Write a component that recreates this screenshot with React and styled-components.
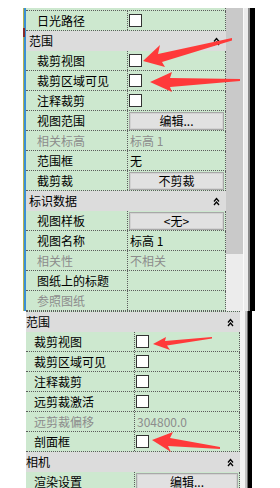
import React from "react";
import styled, { createGlobalStyle } from "styled-components";

const Global = createGlobalStyle`
  html, body { margin: 0; padding: 0; background: #fff; }
  body { font-family: "Noto Sans CJK SC", "Noto Sans", sans-serif; font-size: 12px; }
`;

const Page = styled.div`
  position: relative;
  width: 280px;
  height: 488px;
  overflow: hidden;
  background: #fff;
  padding-top: 8px;
  box-sizing: border-box;
  display: flex;
  flex-direction: column;
`;

const Shot = styled.div`
  display: flex;
  margin-left: ${(p) => p.$left}px;
  height: ${(p) => p.$h}px;
  overflow: hidden;
  flex-shrink: 0;
`;

const LeftEdge = styled.div`
  position: relative;
  width: 3px;
  background: linear-gradient(to right, #b7b24e 0 1px, #3a8fd3 1px 3px);
`;

const EdgeMark = styled.span`
  position: absolute;
  left: 0;
  top: 20px;
  width: 2px;
  height: 9px;
  background: #8a2a2a;
`;

const Panel = styled.div`
  width: ${(p) => p.$w}px;
  display: flex;
  flex-direction: column;
  background: #cde8cf;
  ${(p) => (p.$topLine ? "border-top: 1px dotted #5c5c5c;" : "")}
`;

const Spacer = styled.div`
  height: 5px;
  box-sizing: border-box;
  border-bottom: 1px dotted #5c5c5c;
  border-right: 1px dotted #5c5c5c;
`;

const Row = styled.div`
  display: flex;
  height: 20px;
  flex-shrink: 0;
  box-sizing: border-box;
  border-bottom: 1px dotted #5c5c5c;
  border-right: 1px dotted #5c5c5c;
`;

const Label = styled.div`
  width: ${(p) => p.$w}px;
  flex-shrink: 0;
  box-sizing: border-box;
  padding-left: ${(p) => p.$pad}px;
  border-right: 1px dotted #5c5c5c;
  display: flex;
  align-items: center;
  white-space: nowrap;
  overflow: hidden;
  color: ${(p) => (p.$muted ? "#8c8c8c" : "#000")};
  line-height: 1;
`;

const Value = styled.div`
  flex: 1;
  min-width: 0;
  display: flex;
  align-items: center;
  padding-left: ${(p) => p.$pad ?? 1}px;
  white-space: nowrap;
  color: ${(p) => (p.$muted ? "#8c8c8c" : "#000")};
  line-height: 1;
`;

const Check = styled.span`
  width: 13px;
  height: 13px;
  box-sizing: border-box;
  border: 1px solid #333;
  background: #fff;
`;

const Button = styled.div`
  flex: 1;
  height: 18px;
  margin-right: 1px;
  box-sizing: border-box;
  background: #e1e1e1;
  border: 1px solid #a8a8a8;
  box-shadow: inset 0 0 0 1px #d2d2d2;
  display: flex;
  align-items: center;
  justify-content: center;
  color: #000;
`;

const Header = styled.div`
  height: 20px;
  flex-shrink: 0;
  background: #dcdcdc;
  display: flex;
  align-items: center;
  justify-content: space-between;
  padding-left: ${(p) => p.$pad}px;
  padding-right: 6px;
  color: #000;
  line-height: 1;
`;

const Scrollbar = styled.div`
  width: 17px;
  display: flex;
  flex-direction: column;
  background: #ececec;
`;

const Thumb = styled.div`
  height: ${(p) => p.$h}px;
  background: #c9c9c9;
`;

const Frame = styled.div`
  width: ${(p) => p.$w}px;
  background: ${(p) => p.$bg};
`;

const Overlay = styled.svg`
  position: absolute;
  left: 0;
  top: 0;
  pointer-events: none;
`;

const Chevrons = () => (
  <svg width="7" height="9" viewBox="0 0 7 9" fill="none" stroke="#000" strokeWidth="1.3">
    <polyline points="1,4.5 3.5,1.5 6,4.5" />
    <polyline points="1,8 3.5,5 6,8" />
  </svg>
);

const topItems = [
  { t: "row", label: "日光路径", check: true },
  { t: "head", label: "范围" },
  { t: "row", label: "裁剪视图", check: true },
  { t: "row", label: "裁剪区域可见", check: true },
  { t: "row", label: "注释裁剪", check: true },
  { t: "row", label: "视图范围", button: "编辑..." },
  { t: "row", label: "相关标高", value: "标高 1", muted: true },
  { t: "row", label: "范围框", value: "无" },
  { t: "row", label: "截剪裁", button: "不剪裁" },
  { t: "head", label: "标识数据" },
  { t: "row", label: "视图样板", button: "<无>" },
  { t: "row", label: "视图名称", value: "标高 1" },
  { t: "row", label: "相关性", value: "不相关", muted: true },
  { t: "row", label: "图纸上的标题", value: "" },
  { t: "row", label: "参照图纸", value: "", muted: true },
];

const bottomItems = [
  { t: "head", label: "范围" },
  { t: "row", label: "裁剪视图", check: true },
  { t: "row", label: "裁剪区域可见", check: true },
  { t: "row", label: "注释裁剪", check: true },
  { t: "row", label: "远剪裁激活", check: true },
  { t: "row", label: "远剪裁偏移", value: "304800.0", muted: true },
  { t: "row", label: "剖面框", check: true },
  { t: "head", label: "相机" },
  { t: "row", label: "渲染设置", button: "编辑..." },
];

function Items({ items, labelW, labelPad, headPad }) {
  return items.map((it, i) =>
    it.t === "head" ? (
      <Header key={i} $pad={headPad}>
        <span>{it.label}</span>
        <Chevrons />
      </Header>
    ) : (
      <Row key={i}>
        <Label $w={labelW} $pad={labelPad} $muted={it.muted}>
          {it.label}
        </Label>
        <Value $muted={it.muted} $pad={it.value ? 2 : 1}>
          {it.check && <Check />}
          {it.button && <Button>{it.button}</Button>}
          {it.value}
        </Value>
      </Row>
    )
  );
}

export default function App() {
  return (
    <>
      <Global />
      <Page>
        <Shot $left={23} $h={303}>
          <LeftEdge>
            <EdgeMark />
          </LeftEdge>
          <Panel $w={200}>
            <Spacer />
            <Items items={topItems} labelW={102} labelPad={11} headPad={3} />
          </Panel>
          <Scrollbar>
            <Thumb $h={246} />
          </Scrollbar>
          <Frame
            $w={12}
            $bg="linear-gradient(to right, #fafafa 0 1px, #ececec 1px 5px, #8a8a8a 5px 7px, #000 7px 12px)"
          />
        </Shot>
        <Shot $left={26} $h={177}>
          <Panel $w={214} $topLine>
            <Items items={bottomItems} labelW={109} labelPad={8} headPad={0} />
          </Panel>
          <Frame
            $w={12}
            $bg="linear-gradient(to right, #f3f3f3 0 5px, #c4c4c4 5px 7px, #6a6a6a 7px 8px, #000 8px 12px)"
          />
        </Shot>
        <Overlay width="280" height="488" viewBox="0 0 280 488">
          <g fill="#ff3a3a">
            <polygon points="143,61 160,45 158,54 232,38 232,40.5 162,62 165,67" />
            <polygon points="150,82 172,72 170,78 240,79 240,81 170,87 172,92" />
            <polygon points="153,344 166,337 165,341 212,337 212,338.5 167,345.5 170,350" />
            <polygon points="152,440 173,432 170,438 220,447 220,449 168,446 171,452" />
          </g>
        </Overlay>
      </Page>
    </>
  );
}
